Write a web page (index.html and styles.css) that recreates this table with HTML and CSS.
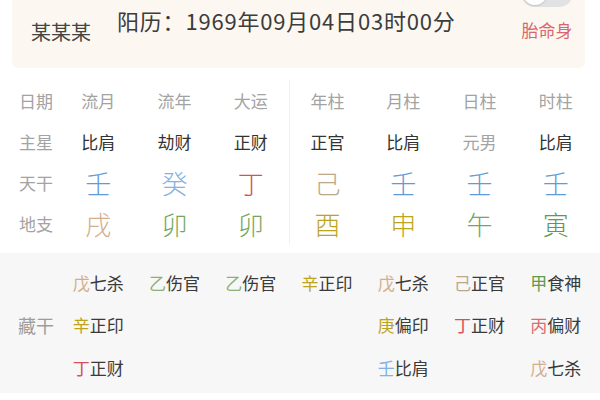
FILE: index.html
```html
<!DOCTYPE html>
<html lang="zh">
<head>
<meta charset="utf-8">
<link rel="stylesheet" href="styles.css">
</head>
<body>
<div class="page">
  <div class="card">
    <div class="name">某某某</div>
    <div class="date">阳历：1969年09月04日03时00分</div>
    <div class="side">
      <div class="toggle"><span class="knob"></span></div>
      <div class="tms">胎命身</div>
    </div>
  </div>

  <div class="table">
    <div class="cell label">日期</div>
    <div class="cell head">流月</div>
    <div class="cell head">流年</div>
    <div class="cell head">大运</div>
    <div class="cell head split">年柱</div>
    <div class="cell head">月柱</div>
    <div class="cell head">日柱</div>
    <div class="cell head">时柱</div>

    <div class="cell label">主星</div>
    <div class="cell star">比肩</div>
    <div class="cell star">劫财</div>
    <div class="cell star">正财</div>
    <div class="cell star split">正官</div>
    <div class="cell star">比肩</div>
    <div class="cell head">元男</div>
    <div class="cell star">比肩</div>

    <div class="cell label">天干</div>
    <div class="cell big water">壬</div>
    <div class="cell big water2">癸</div>
    <div class="cell big fire">丁</div>
    <div class="cell big earth2 split">己</div>
    <div class="cell big water">壬</div>
    <div class="cell big water">壬</div>
    <div class="cell big water">壬</div>

    <div class="cell label">地支</div>
    <div class="cell big earth">戌</div>
    <div class="cell big wood2">卯</div>
    <div class="cell big wood2">卯</div>
    <div class="cell big metal split">酉</div>
    <div class="cell big metal">申</div>
    <div class="cell big wood2">午</div>
    <div class="cell big wood">寅</div>
  </div>

  <div class="hidden">
    <div class="hlabel">藏干</div>
    <div class="hcol">
      <div class="item"><span class="earth">戊</span>七杀</div>
      <div class="item"><span class="metal">辛</span>正印</div>
      <div class="item"><span class="fire">丁</span>正财</div>
    </div>
    <div class="hcol">
      <div class="item"><span class="wood3">乙</span>伤官</div>
    </div>
    <div class="hcol">
      <div class="item"><span class="wood3">乙</span>伤官</div>
    </div>
    <div class="hcol">
      <div class="item"><span class="metal">辛</span>正印</div>
    </div>
    <div class="hcol">
      <div class="item"><span class="earth">戊</span>七杀</div>
      <div class="item"><span class="metal">庚</span>偏印</div>
      <div class="item"><span class="water2">壬</span>比肩</div>
    </div>
    <div class="hcol">
      <div class="item"><span class="earth2">己</span>正官</div>
      <div class="item"><span class="fire">丁</span>正财</div>
    </div>
    <div class="hcol">
      <div class="item"><span class="wood">甲</span>食神</div>
      <div class="item"><span class="fire2">丙</span>偏财</div>
      <div class="item"><span class="earth">戊</span>七杀</div>
    </div>
  </div>
</div>
</body>
</html>
```

FILE: styles.css
```css
* { box-sizing: border-box; }
html, body {
  margin: 0;
  padding: 0;
  background: #ffffff;
}
body {
  width: 600px;
  height: 400px;
  overflow: hidden;
  font-family: "Noto Sans CJK SC", "Noto Sans", sans-serif;
  color: #333;
}
.page {
  width: 600px;
}
.card {
  margin: 0 15px 0 12px;
  height: 68px;
  background: #fcf8f1;
  border-radius: 0 0 6px 6px;
  display: flex;
  align-items: flex-start;
  padding: 0 12px 0 19px;
  overflow: hidden;
}
.name {
  font-size: 20px;
  line-height: 22px;
  margin-top: 21px;
  color: #444;
  width: 86px;
}
.date {
  font-size: 22px;
  line-height: 24px;
  margin-top: 8px;
  color: #3c3c3c;
  letter-spacing: 0.8px;
}
.side {
  margin-left: auto;
  display: flex;
  flex-direction: column;
  align-items: center;
}
.toggle {
  width: 52px;
  height: 28px;
  margin-top: -21px;
  border-radius: 14px;
  background: #e1e2e4;
  padding: 2px;
  display: flex;
}
.knob {
  width: 24px;
  height: 24px;
  border-radius: 50%;
  background: #fff;
  box-shadow: 0 1px 2px rgba(0,0,0,0.15);
}
.tms {
  margin-top: 13px;
  font-size: 17px;
  line-height: 20px;
  color: #d9656f;
}

.table {
  margin-top: 12px;
  padding: 0 6px 0 12px;
  display: grid;
  grid-template-columns: 48px repeat(7, 1fr);
  grid-auto-rows: 41px;
}
.cell {
  display: flex;
  align-items: center;
  justify-content: center;
  font-size: 17px;
}
.split {
  border-left: 1px solid #f1f1f1;
}
.label, .head {
  color: #a3a3a3;
}
.star {
  color: #333;
}
.big {
  font-size: 26px;
  font-weight: 300;
}

.water { color: #5f9bd9; }
.water2 { color: #84b2e2; }
.fire { color: #d84f5a; }
.fire2 { color: #df6b72; }
.earth { color: #d3ae8c; }
.earth2 { color: #b9a98a; }
.metal { color: #bda41e; }
.wood { color: #5f9c49; }
.wood2 { color: #74a65c; }
.wood3 { color: #8db07a; }

.hidden {
  margin-top: 9px;
  height: 140px;
  background: #f7f7f7;
  padding: 8px 6px 0 12px;
  display: grid;
  grid-template-columns: 48px repeat(7, 1fr);
  align-items: start;
}
.hlabel {
  align-self: stretch;
  display: flex;
  align-items: center;
  justify-content: center;
  font-size: 18px;
  color: #9d9d9d;
  height: 127px;
}
.hcol {
  display: flex;
  flex-direction: column;
  align-items: center;
}
.item {
  height: 42.5px;
  display: flex;
  align-items: center;
  font-size: 17px;
  color: #3a3a3a;
}
```
